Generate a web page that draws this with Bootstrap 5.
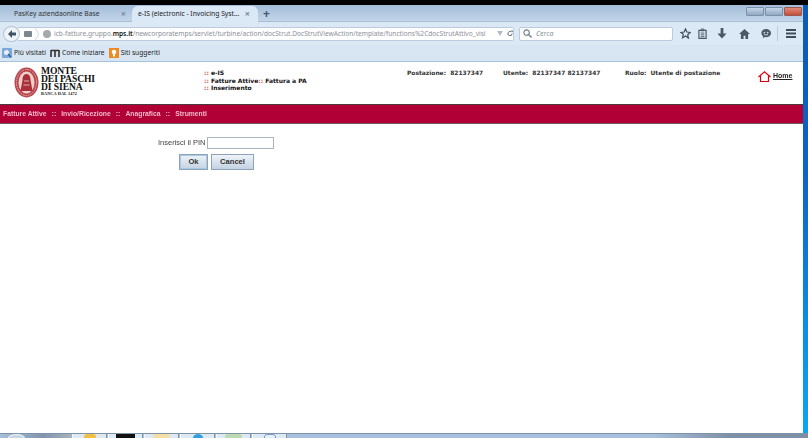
<!DOCTYPE html>
<html lang="en">
  <head>
    <meta charset="UTF-8" />
    <title>e-IS (electronic - Invoicing System)</title>
    <link href="https://cdn.jsdelivr.net/npm/bootstrap@5.3.0/dist/css/bootstrap.min.css" rel="stylesheet">
    <style>
      html, body { height: 438px; overflow: hidden; background: #fff; }
      body { font-family: "Noto Sans", sans-serif; font-size: 7px; color: #333; }
      .screen { height: 438px; filter: blur(.35px); }
      .top-black { height: 5px; background: #000; }
      .win-row { height: 428px; min-height: 0; }
      .edge-blue { width: 5px; background: linear-gradient(#0a5bb5, #0b66c4 40%, #0a8fe4 75%, #08a8f2); }
      .task-bar { height: 5px; background: #a8c1de; border-top: 1px solid #7f93a8; overflow: hidden; }
      .task-start { width: 72px; background: linear-gradient(90deg, #a9c0d9, #8094ad 60%, #a9b4bd); padding-left: 8px; }
      .task-orb { width: 17px; height: 8px; border-radius: 50%; background: #c7d6e4; border: 1px solid #eef4f8; }
      .task-item { width: 35px; margin-right: 1px; background: #dfe9f3; border-left: 1px solid #f4f8fb; border-right: 1px solid #7f93a8; }
      .task-icon { height: 8px; border-radius: 3px 3px 0 0; }
      .ico-yellow { width: 12px; background: #f0c040; }
      .ico-black { width: 19px; background: #111; border-radius: 0; }
      .ico-peach { width: 17px; background: #f4dfa8; }
      .ico-blue { width: 10px; background: #2f9fe0; border-radius: 50%; }
      .ico-green { width: 17px; background: #bcd9b4; }
      .ico-outline { width: 12px; background: #e6eef8; border: 1px solid #7c9bd0; }
      .task-fill { background: linear-gradient(90deg, #a8c1de 70%, #7f8fa6 85%, #7f8fa6); }

      .tab-row { height: 17px; background: linear-gradient(#a3bcd8, #c3d6ea); border-bottom: 1px solid #a8bed6; padding-left: 3px; }
      .tab-off { width: 129px; height: 15px; line-height: 15px; padding: 0 6px 0 11px; color: #333; font-size: 6.75px; white-space: nowrap; }
      .tab-on { width: 126px; height: 16px; line-height: 16px; padding: 0 8px 0 6px; margin-bottom: -1px; background: #dbe8f5; border-radius: 6px 6px 0 0; color: #222; font-size: 6.75px; white-space: nowrap; }
      .tab-x { color: #7b8794; font-size: 9px; font-weight: 700; line-height: 15px; }
      .tab-plus { width: 15px; margin-left: 1px; color: #44586e; font-size: 12px; font-weight: 700; line-height: 15px; text-align: center; }
      .win-btns { padding: 2px 1px 0 0; gap: 1px; }
      .win-btn { height: 9px; width: 18px; border: 1px solid #7e90a6; border-radius: 1px; background: linear-gradient(#c5d5e6, #8fa8c4); }
      .win-btn-close { border-color: #9a5a50; background: linear-gradient(#e08a78, #c24f3b); }

      .tool-row { height: 23px; background: #dbe8f5; padding-left: 3px; }
      .back-btn { width: 17px; height: 16px; border-radius: 50%; border: 1px solid #b3c2d2; background: #eef3f8; z-index: 1; flex: none; }
      .url-box { width: 496px; height: 14px; margin-left: -2px; padding-left: 6px; background: #fff; border: 1px solid #bccbdb; border-left: 0; border-radius: 0 2px 2px 0; color: #8a8f96; font-size: 6.6px; line-height: 12px; white-space: nowrap; flex: none; }
      .url-lock { margin-right: 3px; flex: none; }
      .url-chev { margin-right: 4px; flex: none; }
      .url-globe { margin-right: 3px; flex: none; }
      .url-host { color: #111; font-weight: 600; }
      .url-text { width: 437px; overflow: hidden; flex: none; }
      .url-drop { margin: 0 4px 0 6px; flex: none; }
      .search-box { width: 154px; height: 14px; margin-left: 5px; background: #fff; border: 1px solid #bccbdb; border-radius: 2px; color: #8a8f96; font-size: 7px; font-style: italic; line-height: 12px; padding-left: 3px; flex: none; }
      .tool-icons { padding-left: 7px; }
      .ic-star { margin-right: 7px; }
      .ic-clip { margin-right: 10px; }
      .ic-down { margin-right: 12px; }
      .ic-home { margin-right: 11px; }
      .ic-chat { margin-right: 6px; }
      .tool-sep { width: 1px; height: 15px; background: #bccbdb; margin-right: 8px; }

      .bm-row { height: 17px; background: #d8e6f4; border-bottom: 1px solid #a9c2db; padding-left: 2px; font-size: 6.7px; color: #222; gap: 2px; }
      .bm-gap { margin-right: 2px; }

      .page-head { height: 42px; background: #fff; }
      .logo-area { width: 204px; padding: 5px 0 0 14px; gap: 2px; }
      .logo-name { font-family: "Liberation Serif", serif; font-weight: 700; font-size: 9.6px; line-height: 8px; color: #111; letter-spacing: -.1px; white-space: nowrap; }
      .logo-sub { font-size: 4.3px; line-height: 6px; letter-spacing: .1px; }
      .crumbs { width: 203px; padding-top: 7px; font-family: "DejaVu Sans", sans-serif; font-weight: 700; font-size: 6px; line-height: 7.6px; color: #111; }
      .crumb-sep { color: #e0484f; }
      .user-info { font-family: "DejaVu Sans", sans-serif; font-weight: 700; font-size: 5.95px; line-height: 7px; padding-top: 7px; color: #333; white-space: nowrap; }
      .info-a { width: 96px; }
      .info-b { width: 122px; }
      .info-c { width: 133px; }
      .home-link { font-family: "Liberation Sans", sans-serif; font-weight: 700; font-size: 7px; padding-top: 9px; gap: 2px; }
      .home-link a { color: #222; line-height: 10px; }

      .red-nav { height: 20px; background: #b00035; border-top: 1px solid #4a3a40; border-bottom: 1px solid #6d5a60; padding-left: 3px; font-family: "Liberation Sans", sans-serif; font-weight: 700; font-size: 6.8px; color: #f5b8cc; }
      .nav-sep { padding: 0 5px; font-size: 7px; }

      .pin-area { padding-top: 13px; }
      .pin-line { padding-left: 158px; font-family: "Liberation Sans", sans-serif; font-size: 7.5px; color: #444; }
      .pin-line label { margin: 0; }
      .pin-input { width: 67px; height: 12px; margin-left: 1px; border: 1px solid #a9b4bf; background: #fff; }
      .pin-btns { padding: 5px 0 0 179px; gap: 3px; }
      .pin-btn { height: 16px; padding: 0; border: 1px solid #8ea3b8; border-radius: 0; background: linear-gradient(#eef3f8, #c3d2e2); font-family: "Liberation Sans", sans-serif; font-weight: 700; font-size: 7.6px; color: #333; line-height: 14px; }
      .btn-ok { width: 29px; box-shadow: inset 0 0 0 1px #a9c8e4; }
      .btn-cancel { width: 43px; }
    </style>
  </head>
  <body>
    <div class="screen d-flex flex-column">
      <div class="top-black"></div>

      <div class="win-row d-flex">
        <div class="flex-grow-1 d-flex flex-column" style="min-width:0">
          <!-- browser tabs -->
          <div class="tab-row d-flex align-items-end">
            <div class="tab-off d-flex justify-content-between flex-shrink-0">
              <span>PasKey aziendaonline Base</span><span class="tab-x">×</span>
            </div>
            <div class="tab-on d-flex justify-content-between flex-shrink-0">
              <span>e-IS (electronic - Invoicing Syst...</span><span class="tab-x">×</span>
            </div>
            <div class="tab-plus">+</div>
            <div class="ms-auto d-flex align-self-start win-btns">
              <div class="win-btn"></div>
              <div class="win-btn"></div>
              <div class="win-btn win-btn-close"></div>
            </div>
          </div>

          <!-- url bar -->
          <div class="tool-row d-flex align-items-center">
            <div class="back-btn d-flex align-items-center justify-content-center">
              <svg width="10" height="10" viewBox="0 0 10 10"><path d="M5 1 1 5l4 4V6.500h4v-3H5z" fill="#3f5468"/></svg>
            </div>
            <div class="url-box d-flex align-items-center">
              <svg class="url-lock" width="8" height="8" viewBox="0 0 8 8"><rect x="0" y="1" width="8" height="6" rx="1" fill="#7d858d"/></svg>
              <svg class="url-chev" width="4" height="12" viewBox="0 0 4 12"><path d="M0 0l4 6-4 6" fill="none" stroke="#cdd6df"/></svg>
              <svg class="url-globe" width="8" height="8" viewBox="0 0 8 8"><circle cx="4" cy="4" r="4" fill="#a4a9ae"/></svg>
              <span class="url-text">icb-fatture.gruppo.<span class="url-host">mps.it</span>/newcorporatemps/servlet/turbine/action/docStrut.DocStrutViewAction/template/functions%2CdocStrutAttivo_visi</span>
              <svg class="url-drop" width="6" height="5" viewBox="0 0 6 5"><path d="M0 0h6L3 5z" fill="#b5bcc4"/></svg>
              <svg width="9" height="9" viewBox="0 0 10 10"><path d="M8.500 5A3.500 3.500 0 1 1 7 2.200" fill="none" stroke="#4f5f70" stroke-width="1.500"/><path d="M6 0h3.500v3.500z" fill="#4f5f70"/></svg>
            </div>
            <div class="search-box d-flex align-items-center">
              <svg class="me-1" width="9" height="9" viewBox="0 0 10 10"><circle cx="4" cy="4" r="3" fill="none" stroke="#6d7b8a" stroke-width="1.200"/><path d="M6.500 6.500 9.500 9.500" stroke="#6d7b8a" stroke-width="1.500"/></svg>
              Cerca
            </div>
            <div class="d-flex align-items-center tool-icons">
              <svg class="ic-star" width="11" height="11" viewBox="0 0 12 12"><path d="M6 1l1.500 3.400 3.700.4-2.800 2.500.8 3.700L6 8.700 2.800 10.600l.8-3.700L.8 4.800l3.700-.4z" fill="none" stroke="#3f4c5a" stroke-width="1.300"/></svg>
              <svg class="ic-clip" width="9" height="11" viewBox="0 0 10 12"><path d="M1 2.500h8v9H1z" fill="none" stroke="#4a5866" stroke-width="1.300"/><path d="M3.500 1h3v2h-3zM3 5.500h4M3 7.500h4M3 9.500h4" stroke="#4a5866" fill="none"/></svg>
              <svg class="ic-down" width="10" height="11" viewBox="0 0 10 12"><path d="M3.500 0h3v6H10l-5 5.500L0 6h3.500z" fill="#4a5866"/></svg>
              <svg class="ic-home" width="11" height="10" viewBox="0 0 12 11"><path d="M6 0 0 5.500h2V11h3V7.500h2V11h3V5.500h2z" fill="#4a5866"/></svg>
              <svg class="ic-chat" width="10" height="11" viewBox="0 0 12 12"><path d="M6 .5C2.800.5.500 2.700.500 5.500c0 1.700.9 3.100 2.200 4l-.5 2.200 2.500-1.400c.6.100 1.200.2 1.800.2 3.200 0 5.500-2.200 5.500-5S9.200.5 6 .5z" fill="#4a5866"/><path d="M3.500 4.500h1v1h-1zM7.500 4.500h1v1h-1zM3.500 7c1.500 1 3.500 1 5 0" stroke="#dbe8f5" fill="none"/></svg>
              <div class="tool-sep"></div>
              <svg width="10" height="9" viewBox="0 0 10 9"><path d="M0 0h10v2H0zM0 3.500h10v2H0zM0 7h10v2H0z" fill="#3f4c5a"/></svg>
            </div>
          </div>

          <!-- bookmarks -->
          <div class="bm-row d-flex align-items-center">
            <svg width="10" height="10" viewBox="0 0 10 10"><rect width="10" height="10" rx="1" fill="#7ba7d9"/><circle cx="4.500" cy="4.500" r="2.500" fill="#e7f0f9"/><path d="M6 6l3 3" stroke="#2f5f99" stroke-width="1.500"/></svg>
            <span class="bm-gap">Più visitati</span>
            <svg width="10" height="8" viewBox="0 0 10 8"><path d="M1 1.500h8M1 1v7M5 1v7M9 1v7" stroke="#333" stroke-width="1.600" fill="none"/></svg>
            <span class="bm-gap">Come iniziare</span>
            <svg width="10" height="10" viewBox="0 0 10 10"><rect width="10" height="10" fill="#ee8a1f"/><circle cx="5" cy="4" r="2.300" fill="#fff"/><rect x="4" y="6" width="2" height="2.500" fill="#fff"/></svg>
            <span>Siti suggeriti</span>
          </div>

          <!-- page header -->
          <div class="page-head d-flex">
            <div class="logo-area d-flex">
              <svg width="25" height="31" viewBox="0 0 25 31">
                <ellipse cx="12.500" cy="15.500" rx="12" ry="15" fill="#b9474d"/>
                <ellipse cx="12.500" cy="15.500" rx="10" ry="13" fill="none" stroke="#e3b3b0" stroke-width="1" stroke-dasharray="1.500 1"/>
                <ellipse cx="12.500" cy="15.500" rx="8" ry="11" fill="#edd0cc"/>
                <path d="M12.500 7c-3 0-4 3-4 6l-2 11h12l-2-11c0-3-1-6-4-6z" fill="#a92f38"/>
                <path d="M10 14h5M9.500 18h6" stroke="#e3b3b0"/>
              </svg>
              <div>
                <div class="logo-name">MONTE</div>
                <div class="logo-name">DEI PASCHI</div>
                <div class="logo-name">DI SIENA</div>
                <div class="logo-name logo-sub">BANCA DAL 1472</div>
              </div>
            </div>
            <div class="crumbs">
              <div><span class="crumb-sep">::</span> e-IS</div>
              <div><span class="crumb-sep">::</span> Fatture Attive<span class="crumb-sep">::</span> Fattura a PA</div>
              <div><span class="crumb-sep">::</span> Inserimento</div>
            </div>
            <div class="user-info info-a">Postazione:&nbsp; 82137347</div>
            <div class="user-info info-b">Utente:&nbsp; 82137347 82137347</div>
            <div class="user-info info-c">Ruolo:&nbsp; Utente di postazione</div>
            <div class="home-link d-flex align-items-start">
              <svg width="13" height="11" viewBox="0 0 13 11"><path d="M.5 6 6.500 .8l6 5.200M2.500 4.800v5.700h8V4.800" fill="none" stroke="#d8000f" stroke-width="1.200"/></svg>
              <a href="#">Home</a>
            </div>
          </div>

          <!-- red menu -->
          <div class="red-nav d-flex align-items-center">
            <span>Fatture Attive</span><span class="nav-sep">::</span>
            <span>Invio/Ricezione</span><span class="nav-sep">::</span>
            <span>Anagrafica</span><span class="nav-sep">::</span>
            <span>Strumenti</span>
          </div>

          <!-- PIN form -->
          <div class="pin-area">
            <div class="pin-line d-flex align-items-center">
              <label for="pin">Inserisci il PIN</label>
              <input id="pin" class="pin-input" type="text" />
            </div>
            <div class="pin-btns d-flex">
              <button class="btn pin-btn btn-ok">Ok</button>
              <button class="btn pin-btn btn-cancel">Cancel</button>
            </div>
          </div>
        </div>
        <div class="edge-blue flex-shrink-0"></div>
      </div>

      <!-- windows taskbar, cut off by the screenshot -->
      <div class="task-bar d-flex">
        <div class="task-start"><div class="task-orb"></div></div>
        <div class="task-item d-flex justify-content-center"><div class="task-icon ico-yellow"></div></div>
        <div class="task-item d-flex justify-content-center"><div class="task-icon ico-black"></div></div>
        <div class="task-item d-flex justify-content-center"><div class="task-icon ico-peach"></div></div>
        <div class="task-item d-flex justify-content-center"><div class="task-icon ico-blue"></div></div>
        <div class="task-item d-flex justify-content-center"><div class="task-icon ico-green"></div></div>
        <div class="task-item d-flex justify-content-center"><div class="task-icon ico-outline"></div></div>
        <div class="flex-grow-1 task-fill"></div>
      </div>
    </div>
    <script src="https://cdn.jsdelivr.net/npm/bootstrap@5.3.0/dist/js/bootstrap.bundle.min.js"></script>
  </body>
</html>
